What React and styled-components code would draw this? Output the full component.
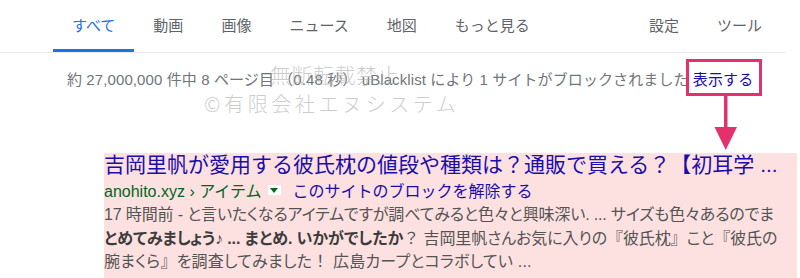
import React from 'react'
import styled, { createGlobalStyle } from 'styled-components'

const GlobalStyle = createGlobalStyle`
    body {
        margin: 0;
        background: #fff;
        font-family: "Liberation Sans", "Noto Sans CJK JP", sans-serif;
    }
`

const tabs = ['すべて', '動画', '画像', 'ニュース', '地図', 'もっと見る']
const tools = ['設定', 'ツール']

export default function App() {
    return (
        <Page>
            <GlobalStyle />
            <Nav>
                {tabs.map((t, i) => (
                    <Tab key={t} active={i === 0}>{t}</Tab>
                ))}
                <Spacer />
                {tools.map(t => (
                    <Tab key={t}>{t}</Tab>
                ))}
            </Nav>
            <Stats>
                約 27,000,000 件中 8 ページ目 （0.48 秒） uBlacklist により 1 サイトがブロックされました <ShowLink>表示する</ShowLink>
            </Stats>
            <Result>
                <Title>吉岡里帆が愛用する彼氏枕の値段や種類は？通販で買える？【初耳学 ...</Title>
                <UrlRow>
                    <Cite>anohito.xyz › アイテム</Cite>
                    <Caret />
                    <Unblock>このサイトのブロックを解除する</Unblock>
                </UrlRow>
                <Snippet>
                    <Line spacing={-0.15}>17 時間前 - と言いたくなるアイテムですが調べてみると色々と興味深い. ... サイズも色々あるのでま</Line>
                    <Line spacing={-0.1}>
                        <b>とめてみましょう♪ ... まとめ. いかがでしたか</b><Punct>？</Punct> 吉岡里帆さんお気に入りの<Punct>『</Punct>彼氏枕<Punct>』</Punct>こと<Punct>『</Punct>彼氏の
                    </Line>
                    <Line spacing={0.2}>腕まくら<Punct>』</Punct>を調査してみました<Punct>！</Punct> 広島カープとコラボしてい ...</Line>
                </Snippet>
            </Result>

            <Watermark>
                <Mark top={59} left={270} size={21} spacing={0.5}>無断転載禁止</Mark>
                <Mark top={89} left={204} size={20} spacing={3.6}>©有限会社エヌシステム</Mark>
            </Watermark>

            <Highlight />
            <Arrow width="24" height="56" viewBox="0 0 24 56">
                <rect x="10" y="0" width="3.5" height="36" fill="#e5306e" />
                <polygon points="0.5,32 23,32 11.75,55" fill="#e5306e" />
            </Arrow>
        </Page>
    )
}

const Page = styled.div`
    position: relative;
    width: 800px;
    height: 278px;
    overflow: hidden;
`

const Nav = styled.nav`
    display: flex;
    box-sizing: border-box;
    width: 786px;
    height: 53px;
    padding: 0 5px 0 53px;
    border-bottom: 1px solid #ebebeb;
`

const Tab = styled.div`
    display: flex;
    align-items: center;
    box-sizing: border-box;
    height: 52px;
    padding: 0 19px;
    font-size: 15px;
    color: ${p => p.active ? '#1a73e8' : '#5f6368'};
    border-bottom: 3px solid ${p => p.active ? '#1a73e8' : 'transparent'};
`

const Spacer = styled.div`
    flex: 1;
`

const Stats = styled.div`
    margin-top: 17px;
    padding-left: 67px;
    font-size: 15px;
    line-height: 20px;
    letter-spacing: 0.1px;
    color: #70757a;
    white-space: nowrap;
`

const ShowLink = styled.span`
    color: #1a0dab;
`

const Result = styled.div`
    margin: 63px 0 0 104px;
    width: 693px;
    height: 130px;
    background: #fde1e1;
    overflow: hidden;
`

const Title = styled.div`
    font-size: 21px;
    line-height: 23px;
    color: #1a0dab;
    white-space: nowrap;
`

const UrlRow = styled.div`
    display: flex;
    align-items: center;
    margin-top: 3px;
    height: 22px;
    font-size: 16px;
    white-space: nowrap;
`

const Cite = styled.span`
    color: #006621;
`

const Caret = styled.span`
    position: relative;
    display: inline-block;
    width: 13px;
    height: 10px;
    margin-left: 6px;
    background: #fff;
    &::after {
        content: '';
        position: absolute;
        left: 2px;
        top: 3px;
        border-left: 4.5px solid transparent;
        border-right: 4.5px solid transparent;
        border-top: 5px solid #006621;
    }
`

const Unblock = styled.span`
    margin-left: 12px;
    color: #1a0dab;
`

const Snippet = styled.div`
    margin-top: 2px;
    font-size: 16px;
    line-height: 23.5px;
    color: #545454;
    font-feature-settings: "palt";
    b {
        color: #3c3c3c;
        font-weight: 700;
    }
`

const Punct = styled.span`
    font-feature-settings: normal;
`

const Line = styled.div`
    white-space: nowrap;
    letter-spacing: ${p => p.spacing}px;
`

const Watermark = styled.div`
    position: absolute;
    inset: 0;
    pointer-events: none;
`

const Mark = styled.div`
    position: absolute;
    top: ${p => p.top}px;
    left: ${p => p.left}px;
    font-family: "Noto Sans CJK JP", sans-serif;
    font-weight: 300;
    font-size: ${p => p.size}px;
    letter-spacing: ${p => p.spacing}px;
    color: rgba(170, 170, 170, 0.6);
    white-space: nowrap;
`

const Highlight = styled.div`
    position: absolute;
    left: 686px;
    top: 59px;
    width: 76px;
    height: 37px;
    box-sizing: border-box;
    border: 3px solid #e5306e;
`

const Arrow = styled.svg`
    position: absolute;
    left: 714px;
    top: 95px;
`
